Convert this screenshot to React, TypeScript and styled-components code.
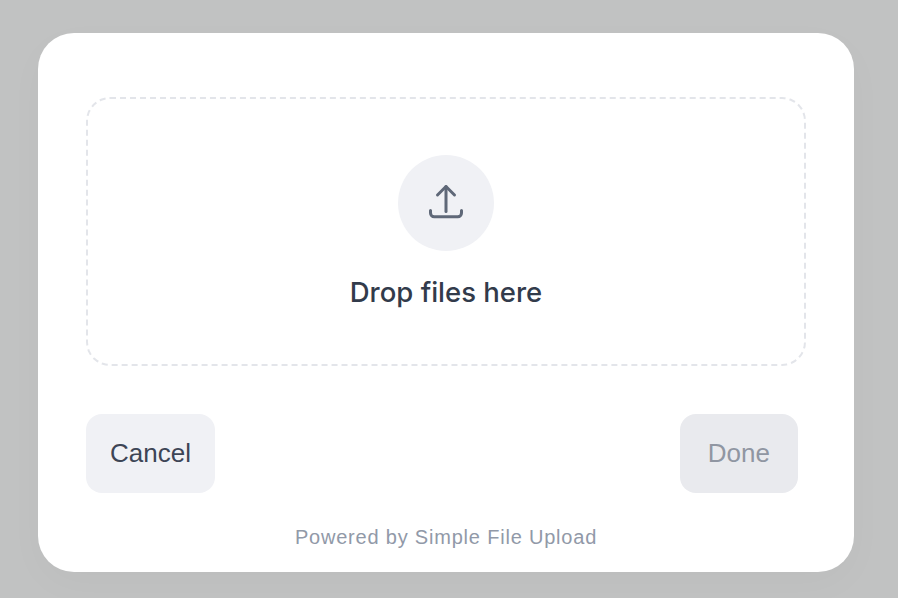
import React from "react";
import styled, { createGlobalStyle } from "styled-components";

const GlobalStyle = createGlobalStyle`
  html, body {
    margin: 0;
    padding: 0;
    height: 100%;
    overflow: hidden;
    background: #c1c2c2;
  }
  * {
    box-sizing: border-box;
  }
`;

const Overlay = styled.div`
  width: 898px;
  height: 598px;
  padding: 33px 0 0 38px;
  display: flex;
  align-items: flex-start;
  background: #c1c2c2;
  font-family: "Liberation Sans", Arial, sans-serif;
`;

const Modal = styled.div`
  width: 816px;
  height: 539px;
  padding: 64px 48px 0;
  display: flex;
  flex-direction: column;
  background: #ffffff;
  border-radius: 36px;
  box-shadow: 0 12px 40px rgba(0, 0, 0, 0.025);
`;

const DropZone = styled.div`
  height: 269px;
  padding-top: 56px;
  display: flex;
  flex-direction: column;
  align-items: center;
  border: 2px dashed #e3e5ea;
  border-radius: 24px;
`;

const IconCircle = styled.div`
  width: 96px;
  height: 96px;
  display: flex;
  align-items: center;
  justify-content: center;
  border-radius: 50%;
  background: #f0f1f5;
  color: #5f6878;
`;

const DropLabel = styled.div`
  margin-top: 23px;
  font-family: Inter, "Liberation Sans", sans-serif;
  font-size: 27.5px;
  line-height: 36px;
  font-weight: 500;
  color: #323b4b;
`;

const Actions = styled.div`
  margin-top: 48px;
  padding-right: 8px;
  display: flex;
  justify-content: space-between;
`;

const Button = styled.button<{ $primary?: boolean }>`
  height: 79px;
  padding: 0 ${(p) => (p.$primary ? "28px" : "24px")};
  border: none;
  border-radius: 16px;
  font-family: inherit;
  font-size: 26px;
  font-weight: 400;
  background: ${(p) => (p.$primary ? "#e9eaee" : "#f0f1f5")};
  color: ${(p) => (p.$primary ? "#9096a2" : "#3d4555")};
`;

const Footer = styled.div`
  margin-top: 29px;
  text-align: center;
  font-size: 20px;
  line-height: 30px;
  letter-spacing: 0.8px;
  color: #9199a8;
`;

const UploadIcon = () => (
  <svg
    width="40"
    height="40"
    viewBox="0 0 40 40"
    fill="none"
    stroke="currentColor"
    strokeWidth="3"
    strokeLinecap="round"
    strokeLinejoin="round"
  >
    <path d="M20 28.500V3.500" />
    <path d="M11.500 12L20 3.500L28.500 12" />
    <path d="M4.500 27.500V30a3.700 3.700 0 0 0 3.700 3.700h23.600a3.700 3.700 0 0 0 3.700-3.700v-2.500" />
  </svg>
);

export default function App() {
  return (
    <>
      <GlobalStyle />
      <Overlay>
        <Modal>
          <DropZone>
            <IconCircle>
              <UploadIcon />
            </IconCircle>
            <DropLabel>Drop files here</DropLabel>
          </DropZone>
          <Actions>
            <Button>Cancel</Button>
            <Button $primary disabled>
              Done
            </Button>
          </Actions>
          <Footer>Powered by Simple File Upload</Footer>
        </Modal>
      </Overlay>
    </>
  );
}
